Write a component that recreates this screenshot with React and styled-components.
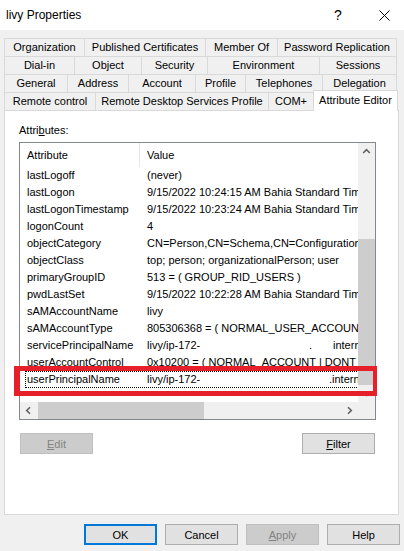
import styled, { createGlobalStyle, css } from "styled-components";

const GlobalStyle = createGlobalStyle`
  html, body {
    margin: 0;
    padding: 0;
    width: 404px;
    height: 551px;
    overflow: hidden;
    background: #f0f0f0;
  }
  body {
    font-family: "Liberation Sans", Arial, sans-serif;
    font-size: 11px;
    color: #000;
  }
`;

// tab rows, bottom row sits next to the page
const tabRows = [
  [["Organization", 80], ["Published Certificates", 121], ["Member Of", 72], ["Password Replication", 120]],
  [["Dial-in", 70], ["Object", 67], ["Security", 66], ["Environment", 112], ["Sessions", 78]],
  [["General", 63], ["Address", 61], ["Account", 67], ["Profile", 50], ["Telephones", 77], ["Delegation", 75]],
  [["Remote control", 91], ["Remote Desktop Services Profile", 173], ["COM+", 45], ["Attribute Editor", 85, true]],
];

const attributes = [
  ["lastLogoff", "(never)"],
  ["lastLogon", "9/15/2022 10:24:15 AM Bahia Standard Time"],
  ["lastLogonTimestamp", "9/15/2022 10:23:24 AM Bahia Standard Time"],
  ["logonCount", "4"],
  ["objectCategory", "CN=Person,CN=Schema,CN=Configuration,DC=corp,DC=local"],
  ["objectClass", "top; person; organizationalPerson; user"],
  ["primaryGroupID", "513 = ( GROUP_RID_USERS )"],
  ["pwdLastSet", "9/15/2022 10:22:28 AM Bahia Standard Time"],
  ["sAMAccountName", "livy"],
  ["sAMAccountType", "805306368 = ( NORMAL_USER_ACCOUNT )"],
  ["servicePrincipalName", [["livy/ip-172-", 162], [".", 24], ["internal"]]],
  ["userAccountControl", "0x10200 = ( NORMAL_ACCOUNT | DONT_EXPIRE_PASSWD )"],
  ["userPrincipalName", [["livy/ip-172-", 182], [".internal"]], true],
];

const Window = styled.div`
  width: 404px;
  height: 551px;
  display: flex;
  flex-direction: column;
  background: #f0f0f0;
`;

const TitleBar = styled.div`
  height: 30px;
  flex: none;
  display: flex;
  align-items: center;
  background: #fff;
  padding-left: 6px;
  gap: 6px;
`;

const Title = styled.div`
  flex: 1;
  font-size: 12px;
`;

const CaptionButton = styled.div`
  width: 40px;
  height: 30px;
  display: flex;
  align-items: center;
  justify-content: center;
  font-size: 14px;
`;

const Body = styled.div`
  padding: 8px 5px 0 4px;
`;

const TabStrip = styled.div`
  display: flex;
  flex-direction: column;
`;

const TabRow = styled.div`
  display: flex;
  align-items: flex-start;
  height: 18px;
`;

const Tab = styled.div`
  width: ${(p) => p.$w}px;
  height: 18px;
  box-sizing: border-box;
  border-top: 1px solid #d9d9d9;
  border-left: 1px solid #d9d9d9;
  background: #f0f0f0;
  text-align: center;
  line-height: 17px;
  white-space: nowrap;
  &:last-child {
    border-right: 1px solid #d9d9d9;
  }
  ${(p) =>
    p.$active &&
    css`
      height: 21px;
      margin-top: -2px;
      margin-bottom: -1px;
      background: #fff;
      position: relative;
      z-index: 1;
      line-height: 19px;
    `}
`;

const Page = styled.div`
  width: 395px;
  height: 405px;
  box-sizing: border-box;
  background: #fff;
  border: 1px solid #d9d9d9;
  padding: 12px 0 0 14px;
`;

const FieldLabel = styled.div`
  height: 14px;
  line-height: 14px;
  margin-bottom: 5px;
`;

const ListBox = styled.div`
  position: relative;
  width: 357px;
  height: 278px;
  box-sizing: border-box;
  border: 1px solid #828790;
  display: grid;
  grid-template-columns: 1fr 17px;
  grid-template-rows: 1fr 17px;
`;

const ListView = styled.div`
  background: #fff;
  overflow: hidden;
`;

const Header = styled.div`
  display: flex;
  height: 24px;
  line-height: 24px;
`;

const HeaderCell = styled.div`
  box-sizing: border-box;
  width: ${(p) => (p.$w ? `${p.$w}px` : "auto")};
  flex: ${(p) => (p.$w ? "none" : 1)};
  padding-left: 7px;
  border-right: ${(p) => (p.$w ? "1px solid #e5e5e5" : "none")};
`;

const Row = styled.div`
  display: flex;
  height: 17px;
  padding-left: 5px;
`;

const RowInner = styled.div`
  flex: 1;
  display: flex;
  box-sizing: border-box;
  height: 17px;
  line-height: 15px;
  border: 1px dotted ${(p) => (p.$focus ? "#000" : "transparent")};
  white-space: nowrap;
`;

const NameCell = styled.div`
  width: 113px;
  flex: none;
  padding-left: 1px;
  overflow: hidden;
`;

const ValueCell = styled.div`
  flex: 1;
  padding-left: 7px;
  overflow: hidden;
`;

const Seg = styled.span`
  display: inline-block;
  width: ${(p) => (p.$w ? `${p.$w}px` : "auto")};
`;

const VScroll = styled.div`
  display: flex;
  flex-direction: column;
  background: #f0f0f0;
`;

const HScroll = styled.div`
  display: flex;
  background: #f0f0f0;
`;

const ArrowButton = styled.div`
  width: 17px;
  height: 17px;
  flex: none;
  display: flex;
  align-items: center;
  justify-content: center;
`;

const Track = styled.div`
  flex: 1;
  display: flex;
  flex-direction: ${(p) => (p.$vertical ? "column" : "row")};
`;

const Thumb = styled.div`
  background: #cdcdcd;
  ${(p) =>
    p.$vertical
      ? css`
          margin-top: ${p.$offset}px;
          height: ${p.$size}px;
        `
      : css`
          margin-left: ${p.$offset}px;
          width: ${p.$size}px;
        `}
`;

const Corner = styled.div`
  background: #f0f0f0;
`;

const Highlight = styled.div`
  position: absolute;
  left: -6px;
  top: 223px;
  width: 363px;
  height: 30px;
  box-sizing: border-box;
  border-style: solid;
  border-color: #e5202a;
  border-width: 5px 4px 5px 6px;
  z-index: 2;
  pointer-events: none;
`;

const ButtonRow = styled.div`
  display: flex;
  justify-content: space-between;
  width: 357px;
  box-sizing: border-box;
  padding: 0 1px;
  margin-top: 13px;
`;

const Button = styled.button`
  width: 73px;
  height: 21px;
  box-sizing: border-box;
  padding: 0;
  font-family: inherit;
  font-size: 11px;
  color: #000;
  background: #e1e1e1;
  border: 1px solid #adadad;
  border-radius: 0;
  ${(p) =>
    p.$primary &&
    css`
      border: 2px solid #0078d7;
    `}
  &:disabled {
    background: #cccccc;
    border-color: #bfbfbf;
    color: #838383;
  }
`;

const Footer = styled.div`
  display: flex;
  justify-content: flex-end;
  gap: 8px;
  padding: 9px 4px 0 0;
`;

const Chevron = ({ dir }) => {
  const rot = { up: 0, right: 90, down: 180, left: 270 }[dir];
  return (
    <svg width="9" height="9" viewBox="0 0 9 9" style={{ transform: `rotate(${rot}deg)` }}>
      <path d="M1.2 6 L4.5 2.7 L7.8 6" fill="none" stroke="#606060" strokeWidth="1.6" />
    </svg>
  );
};

const CloseIcon = () => (
  <svg width="11" height="11" viewBox="0 0 11 11">
    <path d="M0.5 0.5 L10.5 10.5 M10.5 0.5 L0.5 10.5" stroke="#000" strokeWidth="1" />
  </svg>
);

const renderValue = (value) =>
  Array.isArray(value)
    ? value.map(([text, w], i) => (
        <Seg key={i} $w={w}>
          {text}
        </Seg>
      ))
    : value;

export default function App() {
  return (
    <Window>
      <GlobalStyle />
      <TitleBar>
        <Title>livy Properties</Title>
        <CaptionButton>?</CaptionButton>
        <CaptionButton>
          <CloseIcon />
        </CaptionButton>
      </TitleBar>
      <Body>
        <TabStrip>
          {tabRows.map((row, r) => (
            <TabRow key={r}>
              {row.map(([label, w, active]) => (
                <Tab key={label} $w={w} $active={active}>
                  {label}
                </Tab>
              ))}
            </TabRow>
          ))}
        </TabStrip>
        <Page>
          <FieldLabel>
            Attri<u>b</u>utes:
          </FieldLabel>
          <ListBox>
            <ListView>
              <Header>
                <HeaderCell $w={120}>Attribute</HeaderCell>
                <HeaderCell>Value</HeaderCell>
              </Header>
              {attributes.map(([name, value, focus]) => (
                <Row key={name}>
                  <RowInner $focus={focus}>
                    <NameCell>{name}</NameCell>
                    <ValueCell>{renderValue(value)}</ValueCell>
                  </RowInner>
                </Row>
              ))}
            </ListView>
            <VScroll>
              <ArrowButton>
                <Chevron dir="up" />
              </ArrowButton>
              <Track $vertical>
                <Thumb $vertical $offset={79} $size={146} />
              </Track>
              <ArrowButton>
                <Chevron dir="down" />
              </ArrowButton>
            </VScroll>
            <HScroll>
              <ArrowButton>
                <Chevron dir="left" />
              </ArrowButton>
              <Track>
                <Thumb $offset={1} $size={166} />
              </Track>
              <ArrowButton>
                <Chevron dir="right" />
              </ArrowButton>
            </HScroll>
            <Corner />
            <Highlight />
          </ListBox>
          <ButtonRow>
            <Button disabled>
              <u>E</u>dit
            </Button>
            <Button>
              <u>F</u>ilter
            </Button>
          </ButtonRow>
        </Page>
      </Body>
      <Footer>
        <Button $primary>OK</Button>
        <Button>Cancel</Button>
        <Button disabled>
          <u>A</u>pply
        </Button>
        <Button>Help</Button>
      </Footer>
    </Window>
  );
}
